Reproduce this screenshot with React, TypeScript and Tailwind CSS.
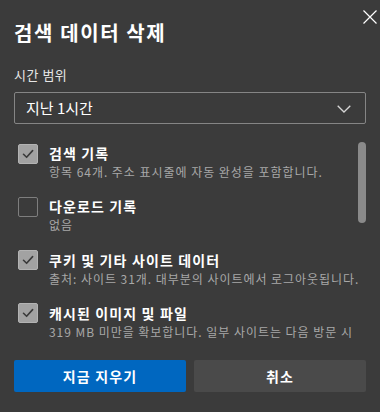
interface ItemProps {
  checked: boolean;
  title: string;
  desc: string;
}

function CheckItem({ checked, title, desc }: ItemProps) {
  return (
    <div className="flex h-[53.33px] items-start gap-[11px] pl-[18px]">
      {/* Box */}
      {checked ? (
        <div className="mt-[0.5px] flex h-[20px] w-[20px] flex-shrink-0 items-center justify-center rounded-[2px] border border-[#b3b3b3] bg-[#a2a2a2]">
          <svg width="14" height="14" viewBox="0 0 14 14" fill="none">
            <path d="M2.5 7.3 L5.6 10.3 L11.6 3.6" stroke="#3a3a3a" strokeWidth="1.6" strokeLinecap="round" strokeLinejoin="round" />
          </svg>
        </div>
      ) : (
        <div className="mt-[0.5px] h-[20px] w-[20px] flex-shrink-0 rounded-[2px] border border-[#7e7e7e]" />
      )}

      {/* Text */}
      <div className="min-w-0 flex-1 pr-[24px]">
        <div className="text-[14px] font-bold leading-[20px] tracking-[0.08em] text-white">{title}</div>
        <div className="whitespace-nowrap text-[12px] leading-[17px] tracking-[0.08em] text-[#a8a8a8]">
          {desc}
        </div>
      </div>
    </div>
  );
}

export default function App() {
  return (
    <div
      className="relative h-[412px] w-[380px] overflow-hidden bg-[#3b3b3b] text-white"
      style={{ fontFamily: '"Noto Sans CJK KR", "Noto Sans", sans-serif' }}
    >
      <button className="absolute left-[363px] top-[10px] text-white">
        <svg width="14" height="14" viewBox="0 0 14 14" fill="none" className="block">
          <path d="M0.5 0.5 L13.5 13.5 M13.5 0.5 L0.5 13.5" stroke="white" strokeWidth="1.2" />
        </svg>
      </button>

      <div className="px-[14px] pt-[19px]">
        <h1 className="text-[20px] font-bold leading-[28px] tracking-[0.08em]">검색 데이터 삭제</h1>

        <div className="mt-[19px] text-[13px] leading-[18px] tracking-[0.04em] text-[#e6e6e6]">시간 범위</div>

        <div className="mt-[8px] flex h-[32px] items-center justify-between rounded-[2px] border border-[#858585] pl-[11px] pr-[14px]">
          <span className="text-[15px] leading-[20px]">지난 1시간</span>
          <svg width="14" height="8" viewBox="0 0 14 8" fill="none" className="mt-[1px] block">
            <path d="M0.7 0.7 L7 7 L13.3 0.7" stroke="#d6d6d6" strokeWidth="1.3" />
          </svg>
        </div>
      </div>

      {/* List */}
      <div className="relative mt-[11px] h-[207px] overflow-hidden pt-[8px]">
        <CheckItem checked title="검색 기록" desc="항목 64개. 주소 표시줄에 자동 완성을 포함합니다." />
        <CheckItem checked={false} title="다운로드 기록" desc="없음" />
        <CheckItem checked title="쿠키 및 기타 사이트 데이터" desc="출처: 사이트 31개. 대부분의 사이트에서 로그아웃됩니다." />
        <CheckItem checked title="캐시된 이미지 및 파일" desc="319 MB 미만을 확보합니다. 일부 사이트는 다음 방문 시" />
        <div className="absolute right-[14px] top-[7px] h-[81px] w-[8px] rounded-full bg-[#8a8a8a]" />
      </div>

      <div className="mt-[18px] flex gap-[8px] px-[14px]">
        <button className="h-[32px] flex-1 rounded-[2px] bg-[#0067c0] text-[14px] font-bold tracking-[0.08em] text-white">
          지금 지우기
        </button>
        <button className="h-[32px] flex-1 rounded-[2px] bg-[#4a4a4a] text-[14px] font-bold tracking-[0.08em] text-white">
          취소
        </button>
      </div>
    </div>
  );
}
